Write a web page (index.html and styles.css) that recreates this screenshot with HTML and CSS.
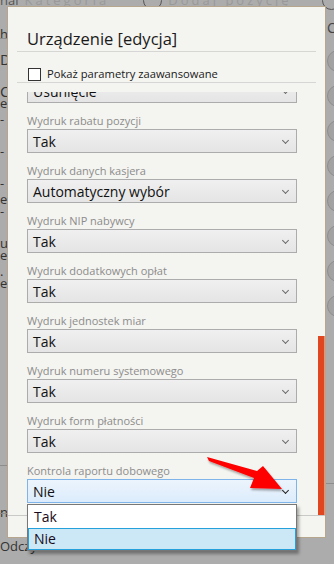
FILE: index.html
```html
<!DOCTYPE html>
<html>
<head>
    <meta charset="utf-8">
    <title>Urządzenie [edycja]</title>
    <link rel="stylesheet" href="styles.css">
</head>
<body>
    <div class="desk">
        <div class="topbar">
            <span class="tb-dark">nai</span>
            <span class="tb-text">Kategoria</span>
            <span class="tb-circle"></span>
            <span class="tb-text">Dodaj pozycję</span>
            <span class="tb-circle tb-circle-2"></span>
            <span class="tb-text">Filtr</span>
            <span class="tb-box">j</span>
        </div>
        <div class="desk-body">
            <div class="left-col">
                <div class="lc lc-h">h</div>
                <div class="lc lc-d">D</div>
                <div class="lc lc-c">C</div>
                <div class="lc">e</div>
                <div class="lc lc-s">-</div>
                <div class="lc lc-m">-</div>
                <div class="lc lc-m">-</div>
                <div class="lc lc-s">e</div>
                <div class="lc">-</div>
                <div class="lc lc-m">us</div>
                <div class="lc">e</div>
                <div class="lc lc-s">.</div>
                <div class="lc">e</div>
                <div class="lc-line"></div>
                <div class="lc lc-ni">ni</div>
                <div class="lc-line lc-line-2"></div>
                <div class="lc lc-o">Odczy</div>
            </div>
            <div class="right-col">
                <div class="rc-c">C</div>
                <div class="circle"></div>
                <div class="circle"></div>
                <div class="circle"></div>
                <div class="circle"></div>
                <div class="circle"></div>
                <div class="circle"></div>
                <div class="circle"></div>
                <div class="circle"></div>
                <div class="rc-line"></div>
            </div>
        </div>
    </div>

    <div class="dialog">
        <div class="dlg-head">Urządzenie [edycja]</div>
        <div class="rule"></div>
        <label class="adv-row">
            <span class="checkbox"></span>
            <span>Pokaż parametry zaawansowane</span>
        </label>
        <div class="rule"></div>

        <div class="scroll-area">
            <div class="fields">
                <div class="select select-cut">Usunięcie</div>

                <div class="field">
                    <div class="field-label">Wydruk rabatu pozycji</div>
                    <div class="select">Tak</div>
                </div>
                <div class="field">
                    <div class="field-label">Wydruk danych kasjera</div>
                    <div class="select">Automatyczny wybór</div>
                </div>
                <div class="field">
                    <div class="field-label">Wydruk NIP nabywcy</div>
                    <div class="select">Tak</div>
                </div>
                <div class="field">
                    <div class="field-label">Wydruk dodatkowych opłat</div>
                    <div class="select">Tak</div>
                </div>
                <div class="field">
                    <div class="field-label">Wydruk jednostek miar</div>
                    <div class="select">Tak</div>
                </div>
                <div class="field">
                    <div class="field-label">Wydruk numeru systemowego</div>
                    <div class="select">Tak</div>
                </div>
                <div class="field">
                    <div class="field-label">Wydruk form płatności</div>
                    <div class="select">Tak</div>
                </div>
                <div class="field">
                    <div class="field-label">Kontrola raportu dobowego</div>
                    <div class="select select-open">Nie</div>
                </div>
            </div>
            <div class="scrollbar">
                <div class="thumb"></div>
            </div>
        </div>

        <div class="dlg-foot"></div>

        <div class="dropdown">
            <div class="option">Tak</div>
            <div class="option option-active">Nie</div>
        </div>
    </div>

    <svg class="pointer" width="334" height="564" viewBox="0 0 334 564">
        <defs>
            <filter id="shadow" x="-20%" y="-20%" width="140%" height="160%">
                <feDropShadow dx="1" dy="2" stdDeviation="1.2" flood-color="#000" flood-opacity="0.35"/>
            </filter>
        </defs>
        <polygon points="207,457 257,471 263,466 282,489 250,488 254,478 209,461" fill="#ff0000" filter="url(#shadow)"/>
    </svg>
</body>
</html>
```

FILE: styles.css
```css
* {
    box-sizing: border-box;
}

body {
    margin: 0;
    width: 334px;
    height: 564px;
    overflow: hidden;
    position: relative;
    background-color: #acacac;
    font-family: "Open Sans", "Noto Sans", sans-serif;
    color: #111;
}

/* underlying window, dimmed */
.desk {
    height: 564px;
    display: flex;
    flex-direction: column;
}

.topbar {
    display: flex;
    align-items: center;
    height: 20px;
    margin-top: -10px;
    font-size: 13px;
    white-space: nowrap;
    overflow: hidden;
}

.tb-dark {
    color: #555;
    margin-right: 6px;
}

.tb-text {
    color: #999;
    letter-spacing: 3px;
}

.tb-circle {
    width: 19px;
    height: 19px;
    flex-shrink: 0;
    border: 1.5px solid #555;
    border-radius: 50%;
    margin: 0 6px 0 34px;
}

.tb-circle-2 {
    margin-left: 30px;
}

.tb-box {
    color: #555;
    margin-left: 10px;
    padding-left: 2px;
}

.desk-body {
    flex: 1;
    display: flex;
    justify-content: space-between;
}

.left-col {
    width: 40px;
    padding-top: 18px;
    font-size: 13px;
    color: #333;
    display: flex;
    flex-direction: column;
}

.lc {
    line-height: 12px;
    height: 12px;
}

.lc-h {
    border-bottom: 1px solid #8d8d8d;
    width: 7px;
    height: 11px;
    overflow: hidden;
}

.lc-d {
    margin-top: 14px;
    font-size: 15px;
}

.lc-c {
    margin-top: 20px;
    font-size: 15px;
}

.lc-s {
    margin-top: 4px;
}

.lc-m {
    margin-top: 20px;
}

.lc-line {
    width: 7px;
    height: 1px;
    flex-shrink: 0;
    background: #8d8d8d;
    margin-top: 176px;
}

.lc-ni {
    margin-top: 40px;
}

.lc-line-2 {
    margin-top: -5px;
}

.lc-o {
    margin-top: 26px;
}

.right-col {
    width: 9px;
    display: flex;
    flex-direction: column;
    align-items: flex-start;
    overflow: hidden;
}

.rc-c {
    font-size: 14px;
    color: #444;
    line-height: 14px;
    padding-left: 2px;
    margin-top: 11px;
}

.circle {
    width: 22px;
    height: 22px;
    flex-shrink: 0;
    border: 1px solid #8e8e8e;
    border-radius: 50%;
    background-color: #a2a2a2;
    margin-top: 13px;
    margin-left: 2px;
}

.rc-c + .circle {
    margin-top: 15px;
}

.rc-line {
    width: 9px;
    height: 1px;
    flex-shrink: 0;
    background: #8d8d8d;
    margin-top: 166px;
}

/* dialog */
.dialog {
    position: absolute;
    left: 7px;
    top: 6px;
    width: 319px;
    height: 532px;
    border: 1px solid #b6a68d;
    background-color: #f4f4f0;
    display: flex;
    flex-direction: column;
}

.dlg-head {
    height: 44px;
    padding: 21px 0 0 19px;
    font-size: 16.5px;
    line-height: 22px;
    color: #1a1a1a;
}

.rule {
    height: 1px;
    margin: 0 9px;
    background-color: #d6d6d4;
    flex-shrink: 0;
}

.adv-row {
    height: 30px;
    display: flex;
    align-items: flex-end;
    padding: 0 0 1px 20px;
    font-size: 11.2px;
    line-height: 14px;
    color: #1a1a1a;
}

.checkbox {
    width: 13px;
    height: 13px;
    border: 1px solid #333;
    background: #fff;
    margin-right: 6px;
}

.scroll-area {
    flex: 1;
    min-height: 0;
    display: flex;
    padding-top: 9px;
}

.fields {
    flex: 1;
    overflow: hidden;
    padding-left: 19px;
}

.field {
    margin-top: 10px;
}

.field-label {
    font-size: 11px;
    line-height: 16px;
    color: #8c8c8c;
}

.select {
    width: 270px;
    height: 24px;
    border: 1px solid #acacac;
    background: linear-gradient(#f0f0f0, #e5e5e5);
    display: flex;
    align-items: center;
    padding-left: 5px;
    font-size: 14px;
    color: #111;
    position: relative;
}

.select::after {
    content: "";
    position: absolute;
    right: 8px;
    top: 8px;
    width: 4px;
    height: 4px;
    border-right: 1px solid #6a6a6a;
    border-bottom: 1px solid #6a6a6a;
    transform: rotate(45deg);
}

.select-cut {
    margin-top: -13px;
}

.select-open {
    border-color: #7eb4ea;
    background: linear-gradient(#ecf4fc, #dcecfc);
}

.select-open::after {
    border-color: #222;
    border-width: 0 1.5px 1.5px 0;
}

.scrollbar {
    width: 7px;
    margin-top: -9px;
    display: flex;
    flex-direction: column;
    justify-content: flex-end;
}

.thumb {
    height: 179px;
    background-color: #e0461f;
    border-right: 1px solid #ee9077;
}

.dlg-foot {
    height: 22px;
    border-top: 1px solid #c9c9c7;
    flex-shrink: 0;
}

.dropdown {
    position: absolute;
    left: 19px;
    top: 497px;
    width: 270px;
    border: 1px solid #777;
    background-color: #fff;
    box-shadow: 2px 3px 3px rgba(0, 0, 0, 0.35);
}

.option {
    height: 23px;
    line-height: 21px;
    padding-left: 5px;
    font-size: 14px;
    color: #1a0a20;
    border: 1px solid transparent;
}

.option-active {
    background-color: #cce8f6;
    border-color: #26a0da;
    height: 22px;
    line-height: 20px;
}

.pointer {
    position: absolute;
    left: 0;
    top: 0;
    pointer-events: none;
}
```
